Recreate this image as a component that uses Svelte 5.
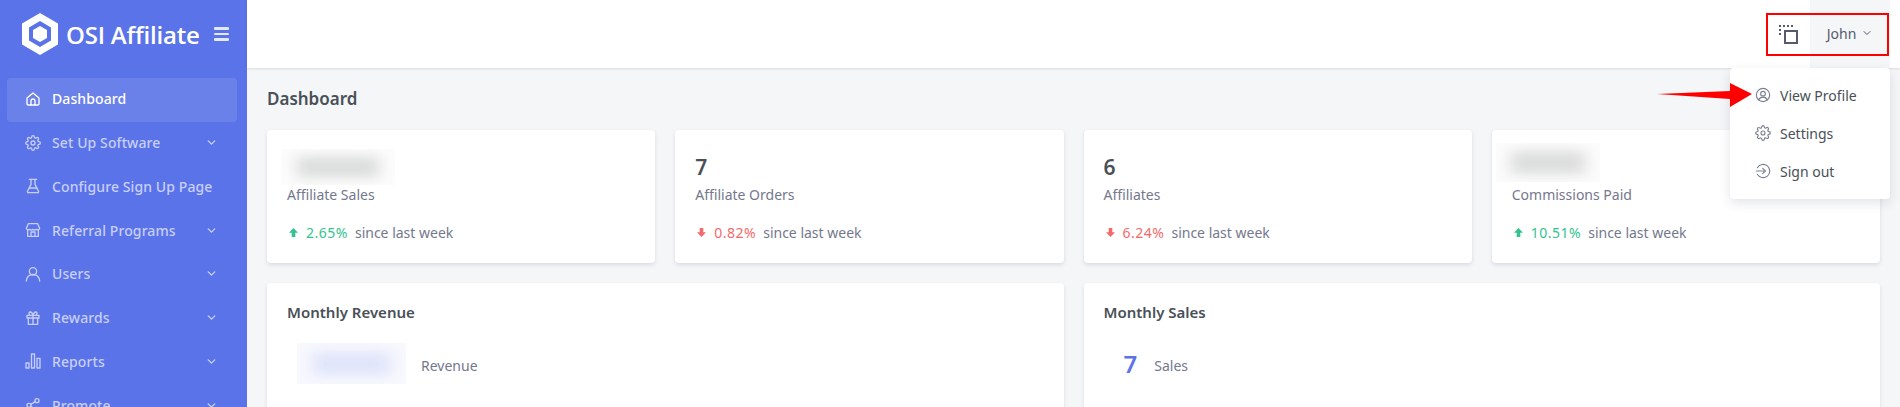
<script>
  const icons = {
    home: ['M3 10.5 12 3l9 7.500V19a2 2 0 0 1-2 2H5a2 2 0 0 1-2-2z', 'M9 21v-6a3 3 0 0 1 6 0v6'],
    gear: ['M19.4 15a1.65 1.65 0 0 0 .33 1.82l.06.06a2 2 0 0 1 0 2.83 2 2 0 0 1-2.83 0l-.06-.06a1.65 1.65 0 0 0-1.82-.33 1.65 1.65 0 0 0-1 1.51V21a2 2 0 0 1-2 2 2 2 0 0 1-2-2v-.09A1.65 1.65 0 0 0 9 19.4a1.65 1.65 0 0 0-1.82.33l-.06.06a2 2 0 0 1-2.83 0 2 2 0 0 1 0-2.83l.06-.06a1.65 1.65 0 0 0 .33-1.82 1.65 1.65 0 0 0-1.51-1H3a2 2 0 0 1-2-2 2 2 0 0 1 2-2h.09A1.65 1.65 0 0 0 4.6 9a1.65 1.65 0 0 0-.33-1.82l-.06-.06a2 2 0 0 1 0-2.83 2 2 0 0 1 2.83 0l.06.06a1.65 1.65 0 0 0 1.82.33H9a1.65 1.65 0 0 0 1-1.51V3a2 2 0 0 1 2-2 2 2 0 0 1 2 2v.09a1.65 1.65 0 0 0 1 1.51 1.65 1.65 0 0 0 1.82-.33l.06-.06a2 2 0 0 1 2.83 0 2 2 0 0 1 0 2.83l-.06.06a1.65 1.65 0 0 0-.33 1.82V9a1.65 1.65 0 0 0 1.51 1H21a2 2 0 0 1 2 2 2 2 0 0 1-2 2h-.09a1.65 1.65 0 0 0-1.51 1z', 'M12 9a3 3 0 1 0 0 6 3 3 0 0 0 0-6z'],
    flask: ['M6.5 2h11', 'M9 2v7.500L4 19.500A1.500 1.500 0 0 0 5.500 22h13a1.500 1.500 0 0 0 1.500-2.500L15 9.500V2', 'M6.500 15h11'],
    store: ['M5 2.500h14l3 7a3 3 0 0 1-5 1.500 3.500 3.500 0 0 1-5 0 3.500 3.500 0 0 1-5 0 3 3 0 0 1-5-1.500z', 'M4 12v9.500h16V12', 'M9 21.500V15h6v6.500'],
    user: ['M12 2.500a5.500 5.500 0 1 0 0 11 5.500 5.500 0 0 0 0-11z', 'M2 22.500a10 10 0 0 1 20 0'],
    gift: ['M3 8h18v4H3z', 'M5 12v9.500h14V12', 'M12 8v13.500', 'M12 8S10.500 2.500 7.500 3C5 3.500 6 8 8 8', 'M12 8s1.500-5.500 4.500-5c2.500.5 1.500 5-.5 5'],
    bars: ['M1.500 15h4.500v7.500H1.500z', 'M9.750 1.500h4.500v21h-4.500z', 'M18 8h4.500v14.500H18z'],
    share: ['M6 9.500a3 3 0 1 0 0 6 3 3 0 0 0 0-6z', 'M18 2.500a3 3 0 1 0 0 6 3 3 0 0 0 0-6z', 'M18 15.500a3 3 0 1 0 0 6 3 3 0 0 0 0-6z', 'M8.600 11 15.400 7', 'M8.600 14l6.800 4'],
    chevron: ['M6 9l6 6 6-6'],
    profile: ['M12 2a10 10 0 1 0 0 20 10 10 0 0 0 0-20z', 'M12 6.500a3.500 3.500 0 1 0 0 7 3.500 3.500 0 0 0 0-7z', 'M5.500 19.500a7 7 0 0 1 13 0'],
    signout: ['M3.500 7a10 10 0 1 1 0 10', 'M2 12h13.500', 'M11.500 8l4 4-4 4']
  };

  const nav = [
    { label: 'Dashboard', icon: 'home', active: true },
    { label: 'Set Up Software', icon: 'gear', more: true },
    { label: 'Configure Sign Up Page', icon: 'flask' },
    { label: 'Referral Programs', icon: 'store', more: true },
    { label: 'Users', icon: 'user', more: true },
    { label: 'Rewards', icon: 'gift', more: true },
    { label: 'Reports', icon: 'bars', more: true },
    { label: 'Promote', icon: 'share', more: true }
  ];

  const stats = [
    { label: 'Affiliate Sales', blur: 'wide', up: true, pct: '2.65%' },
    { value: '7', label: 'Affiliate Orders', up: false, pct: '0.82%' },
    { value: '6', label: 'Affiliates', up: false, pct: '6.24%' },
    { label: 'Commissions Paid', blur: 'paid', up: true, pct: '10.51%' }
  ];

  const menu = [
    { label: 'View Profile', icon: 'profile' },
    { label: 'Settings', icon: 'gear' },
    { label: 'Sign out', icon: 'signout' }
  ];
</script>

{#snippet icon(name, cls)}
  <svg class={cls} viewBox="0 0 24 24" fill="none" stroke="currentColor" stroke-width="2" stroke-linecap="round" stroke-linejoin="round">
    {#each icons[name] as d}
      <path {d} />
    {/each}
  </svg>
{/snippet}

<div class="layout">
  <aside class="sidebar">
    <div class="brand">
      <svg class="logo" viewBox="0 0 38 42">
        <path fill="#fff" fill-rule="evenodd" d="M19 0 37 10.500v21L19 42 1 31.500v-21zM19 8 8 14.500v13L19 34l11-6.500v-13z" />
        <path fill="#fff" d="M19 13 26 17v8l-7 4-7-4v-8z" />
      </svg>
      <span class="brand-name">OSI Affiliate</span>
      <span class="burger"><i></i><i></i><i></i></span>
    </div>
    <nav>
      {#each nav as item}
        <div class="nav-item" class:active={item.active}>
          {@render icon(item.icon, 'nav-icon')}
          <span class="nav-label">{item.label}</span>
          {#if item.more}
            {@render icon('chevron', 'nav-more')}
          {/if}
        </div>
      {/each}
    </nav>
  </aside>

  <div class="main">
    <header class="topbar">
      <div class="top-icon">
        <svg class="layers" viewBox="0 0 19 19" fill="none" stroke="currentColor" stroke-width="2">
          <path stroke-dasharray="2 2" d="M1 10V1h13" />
          <path d="M6 6h12v12H6z" />
        </svg>
      </div>
      <div class="user-btn">
        <span>John</span>
        {@render icon('chevron', 'user-more')}
      </div>
    </header>

    <main class="content">
      <h1>Dashboard</h1>

      <div class="stats">
        {#each stats as s}
          <section class="card stat">
            {#if s.blur}
              <div class="blur {s.blur}"><b></b></div>
            {:else}
              <div class="value">{s.value}</div>
            {/if}
            <div class="label">{s.label}</div>
            <div class="change">
              <svg class="trend" class:down={!s.up} viewBox="0 0 10 10">
                <path d="M5 0 10 5.200H7V10H3V5.200H0z" />
              </svg>
              <span class="pct {s.up ? 'up' : 'down'}">{s.pct}</span>
              <span>since last week</span>
            </div>
          </section>
        {/each}
      </div>

      <div class="charts">
        <section class="card chart">
          <h2>Monthly Revenue</h2>
          <div class="metric revenue">
            <div class="blur blue"><b></b></div>
            <span>Revenue</span>
          </div>
        </section>
        <section class="card chart">
          <h2>Monthly Sales</h2>
          <div class="metric sales">
            <strong>7</strong>
            <span>Sales</span>
          </div>
        </section>
      </div>
    </main>
  </div>

  <div class="dropdown">
    {#each menu as m}
      <div class="menu-item">
        {@render icon(m.icon, 'menu-icon')}
        <span>{m.label}</span>
      </div>
    {/each}
  </div>

  <!-- annotations on top of the screenshot -->
  <div class="callout-box"></div>
  <svg class="callout-arrow" viewBox="0 0 95 24">
    <path fill="#ff0000" d="M0 11 73 8 73 0 95 11 73 24 73 16z" />
  </svg>
</div>

<style>
  :global(body) {
    margin: 0;
    background: #f5f6f8;
    font-family: "Noto Sans", "Liberation Sans", sans-serif;
    overflow: hidden;
  }

  .layout {
    position: relative;
    display: grid;
    grid-template-columns: 247px 1fr;
    height: 407px;
    overflow: hidden;
    font-size: 14px;
    color: #74788d;
  }

  .sidebar {
    background: #5b73e8;
    overflow: hidden;
  }
  .brand {
    display: flex;
    align-items: center;
    height: 68px;
    padding-left: 21px;
    box-sizing: border-box;
  }
  .logo {
    width: 38px;
    height: 42px;
    flex: none;
  }
  .brand-name {
    margin-left: 7px;
    width: 148px;
    color: #fff;
    font-family: "Open Sans", sans-serif;
    font-size: 24px;
    font-weight: 600;
    letter-spacing: -0.2px;
    white-space: nowrap;
  }
  .burger {
    display: flex;
    flex-direction: column;
    gap: 3px;
    width: 15px;
  }
  .burger i {
    height: 2.500px;
    background: #e4e8fc;
    border-radius: 1px;
  }

  nav {
    padding: 10px 10px 0 7px;
  }
  .nav-item {
    display: flex;
    align-items: center;
    height: 43.750px;
    padding: 0 19px 2px 18px;
    box-sizing: border-box;
    color: #c7cffa;
    font-size: 14px;
    letter-spacing: 0.1px;
    font-weight: 500;
    border-radius: 4px;
    white-space: nowrap;
  }
  .nav-item.active {
    background: #6b81ea;
    color: #fff;
  }
  .nav-item :global(.nav-icon) {
    width: 16px;
    height: 16px;
    flex: none;
    margin-right: 11px;
  }
  .nav-label {
    flex: 1;
  }
  .nav-item :global(.nav-more) {
    width: 13px;
    height: 13px;
    stroke-width: 2.600;
  }

  .main {
    min-width: 0;
    display: flex;
    flex-direction: column;
  }
  .topbar {
    display: flex;
    justify-content: flex-end;
    flex: none;
    height: 68px;
    padding-right: 10px;
    background: #fff;
    box-shadow: 0 1px 2px rgba(56, 65, 74, 0.15);
    z-index: 1;
  }
  .top-icon {
    display: flex;
    align-items: center;
    justify-content: center;
    width: 44px;
    color: #555b6d;
  }
  .layers {
    width: 19px;
    height: 19px;
  }
  .user-btn {
    display: flex;
    align-items: center;
    justify-content: center;
    gap: 5px;
    width: 80px;
    padding-bottom: 2px;
    box-sizing: border-box;
    background: #f5f6f8;
    color: #555b6d;
    font-size: 14px;
  }
  .user-btn :global(.user-more) {
    width: 12px;
    height: 12px;
  }

  .content {
    padding: 20px 20px 0;
  }
  h1 {
    margin: 0 0 20px;
    height: 22px;
    font-size: 17px;
    line-height: 22px;
    font-weight: 600;
    color: #495057;
  }

  .stats {
    display: grid;
    grid-template-columns: repeat(4, 1fr);
    gap: 20px;
    margin-bottom: 20px;
  }
  .charts {
    display: grid;
    grid-template-columns: 1fr 1fr;
    gap: 20px;
  }
  .card {
    background: #fff;
    border-radius: 4px;
    box-shadow: 0 2px 4px rgba(15, 34, 58, 0.12);
  }
  .stat {
    height: 133px;
    box-sizing: border-box;
    padding: 20px;
  }
  .value {
    height: 35px;
    font-size: 21px;
    line-height: 35px;
    font-weight: 600;
    color: #495057;
  }
  .label {
    line-height: 20px;
  }
  .change {
    display: flex;
    align-items: center;
    height: 20px;
    margin-top: 17px;
    padding-left: 2px;
  }
  .change span + span {
    margin-left: 7px;
  }
  .pct {
    margin-left: 1px;
    letter-spacing: 0.5px;
  }
  .trend {
    width: 9px;
    height: 9px;
    margin-right: 7px;
    fill: #34c38f;
  }
  .trend.down {
    fill: #f46a6a;
    transform: rotate(180deg);
  }
  .up {
    color: #34c38f;
  }
  .down {
    color: #f46a6a;
  }

  .blur {
    overflow: hidden;
    background: #fcfcfc;
  }
  .blur b {
    display: block;
    height: 100%;
    background: #dcdddd;
    filter: blur(10px);
    transform: scale(0.72, 0.6);
  }
  .blur.wide {
    width: 114px;
    height: 36px;
    margin: -1px 0 0 -6px;
  }
  .blur.paid {
    width: 104px;
    height: 39px;
    margin: -7px 0 3px -16px;
  }
  .blur.blue {
    width: 109px;
    height: 41px;
    background: #f8f9fe;
  }
  .blur.blue b {
    background: #e0e5fa;
  }

  .chart {
    height: 200px;
    padding: 20px;
    box-sizing: border-box;
  }
  h2 {
    margin: -1px 0 1px;
    font-size: 15px;
    line-height: 20px;
    font-weight: 600;
    color: #495057;
  }
  .metric {
    display: flex;
    align-items: center;
    height: 41px;
    margin-top: 21px;
  }
  .metric span {
    padding-top: 4px;
  }
  .revenue {
    padding-left: 10px;
    gap: 15px;
  }
  .sales {
    padding-left: 20px;
    gap: 17px;
  }
  .sales strong {
    font-size: 24px;
    font-weight: 600;
    color: #5b73e8;
  }

  .dropdown {
    position: absolute;
    top: 68px;
    right: 10px;
    width: 160px;
    height: 131px;
    padding-top: 8px;
    box-sizing: border-box;
    background: #fff;
    border-radius: 4px;
    box-shadow: 0 4px 12px rgba(15, 34, 58, 0.12);
    color: #495057;
    z-index: 2;
  }
  .menu-item {
    display: flex;
    align-items: center;
    height: 38px;
    padding-left: 25px;
  }
  .menu-item :global(.menu-icon) {
    width: 16px;
    height: 16px;
    margin-right: 9px;
    color: #7b8190;
    stroke-width: 1.700;
  }

  .callout-box {
    position: absolute;
    left: 1766px;
    top: 13px;
    width: 123px;
    height: 43px;
    box-sizing: border-box;
    border: 2px solid #f00;
    z-index: 3;
  }
  .callout-arrow {
    position: absolute;
    left: 1657px;
    top: 83px;
    width: 95px;
    height: 24px;
    z-index: 3;
  }
</style>
